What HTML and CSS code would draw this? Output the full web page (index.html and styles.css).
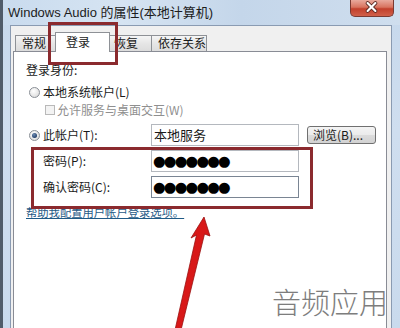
FILE: index.html
```html
<!DOCTYPE html>
<html lang="zh-CN">
<head>
<meta charset="utf-8">
<title>Windows Audio 的属性</title>
<link rel="stylesheet" href="styles.css">
</head>
<body>
<div class="window">
  <div class="titlebar">
    <span class="title">Windows Audio 的属性(本地计算机)</span>
    <div class="close">
      <svg width="44" height="17" viewBox="0 0 44 17">
        <path d="M18 4 L26 12 M26 4 L18 12" stroke="#5a2a24" stroke-width="4" stroke-linecap="round"/>
        <path d="M18 4 L26 12 M26 4 L18 12" stroke="#ffffff" stroke-width="2.2" stroke-linecap="round"/>
      </svg>
    </div>
  </div>
  <div class="client">
    <div class="tabs">
      <div class="tab tab-general">常规</div>
      <div class="tab tab-logon active">登录</div>
      <div class="tab tab-recovery">恢复</div>
      <div class="tab tab-deps">依存关系</div>
    </div>
    <div class="panel">
      <div class="section">登录身份:</div>
      <div class="opt"><span class="radio"></span><span>本地系统帐户(L)</span></div>
      <div class="opt sub disabled"><span class="check"></span><span>允许服务与桌面交互(W)</span></div>
      <div class="grid">
        <div class="opt"><span class="radio on"></span><span>此帐户(T):</span></div>
        <div class="field">本地服务</div>
        <div class="btn">浏览(B)...</div>
        <div class="lbl">密码(P):</div>
        <div class="field pw">●●●●●●●</div>
        <div></div>
        <div class="lbl">确认密码(C):</div>
        <div class="field pw focus">●●●●●●●</div>
        <div></div>
      </div>
      <a class="link">帮助我配置用户帐户登录选项。</a>
    </div>
  </div>
</div>
<div class="mark mark-tab"></div>
<div class="mark mark-pw"></div>
<svg class="arrow" width="400" height="328" viewBox="0 0 400 328">
  <polygon points="204,217 210,236 204.5,234 181,330 175,330 196.5,235 191,238" fill="#d81818" stroke="#9a1010" stroke-width="0.8" stroke-linejoin="round"/>
</svg>
<div class="watermark">音频应用</div>
</body>
</html>
```

FILE: styles.css
```css
html, body {
  margin: 0;
  padding: 0;
}
body {
  width: 400px;
  height: 328px;
  overflow: hidden;
  position: relative;
  font-family: "Noto Sans CJK SC", "Liberation Sans", sans-serif;
  font-size: 12px;
  color: #1a1a1a;
}
.window {
  width: 400px;
  height: 328px;
  box-sizing: border-box;
  border-left: 3px solid #505c6a;
  background: linear-gradient(180deg, #c6d8ec 0%, #cfdeef 40%, #c9daed 100%);
  display: flex;
  flex-direction: column;
}
.titlebar {
  height: 25px;
  display: flex;
  align-items: flex-start;
  padding-left: 5px;
  background: linear-gradient(90deg, #c9dbee 0%, #d6e4f2 30%, #c4d6ea 60%, #cfdeee 100%);
}
.title {
  font-family: "Liberation Sans", "Noto Sans CJK SC", sans-serif;
  font-size: 13px;
  line-height: 25px;
  color: #1c1c1c;
}
.close {
  margin-left: auto;
  margin-right: 6px;
  width: 44px;
  height: 17px;
  box-sizing: border-box;
  border: 1px solid #7a3a32;
  border-top: none;
  border-radius: 0 0 5px 5px;
  background: linear-gradient(180deg, #e9a99d 0%, #d8735f 45%, #c2402c 55%, #d0604a 100%);
  display: flex;
}
.close svg {
  margin: -1px 0 0 -1px;
}
.client {
  flex: 1;
  margin: 0 8px 0 7px;
  background: #f0f0f0;
  border: 1px solid #8a9bb2;
  border-bottom: none;
  padding: 6px 4px 0 2px;
  display: flex;
  flex-direction: column;
}
.tabs {
  display: flex;
  align-items: flex-end;
  height: 19px;
  margin-left: 2px;
  position: relative;
  z-index: 2;
}
.tab {
  box-sizing: border-box;
  height: 16px;
  border: 1px solid #8e9196;
  border-bottom: none;
  background: linear-gradient(180deg, #f5f5f5 0%, #e6e6e6 50%, #dcdcdc 100%);
  padding-left: 6px;
  font-size: 12px;
  line-height: 14px;
  white-space: nowrap;
  overflow: hidden;
  margin-right: -1px;
}
.tab-general { width: 43px; }
.tab-logon { width: 52px; }
.tab-recovery { width: 45px; }
.tab-deps { width: 56px; }
.tab.active {
  height: 20px;
  margin: 0 -3px -1px -2px;
  width: 55px;
  padding-left: 10px;
  line-height: 17px;
  background: #ffffff;
  position: relative;
  z-index: 3;
}
.panel {
  flex: 1;
  background: #ffffff;
  border: 1px solid #898c95;
  border-bottom: none;
  padding: 10px 0 0 12px;
  position: relative;
  z-index: 1;
}
.section {
  line-height: 16px;
  height: 16px;
}
.opt {
  display: flex;
  align-items: center;
  height: 16px;
  line-height: 16px;
  margin-top: 6px;
  gap: 3px;
}
.opt .radio {
  margin-left: 3px;
}
.opt.sub {
  margin-top: 2px;
  padding-left: 19px;
  gap: 2px;
}
.disabled {
  color: #8f8f8f;
}
.radio {
  width: 11px;
  height: 11px;
  box-sizing: border-box;
  border-radius: 50%;
  border: 1px solid #8a8f96;
  background: radial-gradient(circle at 40% 35%, #ffffff 0%, #e6e6e6 60%, #cfcfcf 100%);
  flex: none;
  display: flex;
  align-items: center;
  justify-content: center;
}
.radio.on::after {
  content: "";
  width: 5px;
  height: 5px;
  border-radius: 50%;
  background: radial-gradient(circle at 40% 35%, #6f8db5 0%, #24406a 70%);
}
.check {
  width: 10px;
  height: 10px;
  box-sizing: border-box;
  border: 1px solid #b9b9b9;
  background: #f3f3f3;
  flex: none;
}
.grid {
  display: grid;
  grid-template-columns: 117px 148px 69px;
  column-gap: 8px;
  grid-auto-rows: 22px;
  row-gap: 4px;
  margin-top: 6px;
  align-items: center;
}
.grid .opt {
  margin-top: 0;
}
.lbl {
  padding-left: 17px;
  line-height: 16px;
}
.field {
  height: 22px;
  box-sizing: border-box;
  border: 1px solid #b4b8be;
  background: #ffffff;
  padding-left: 2px;
  font-size: 13px;
  line-height: 20px;
  white-space: nowrap;
  overflow: hidden;
}
.field.pw {
  font-family: "DejaVu Sans", sans-serif;
  font-size: 14.5px;
  letter-spacing: -1.8px;
  line-height: 20px;
  padding-left: 1px;
  color: #000000;
}
.field.focus {
  border-color: #7a8593;
}
.btn {
  height: 18px;
  box-sizing: border-box;
  border: 1px solid #707070;
  border-radius: 3px;
  background: linear-gradient(180deg, #f4f4f4 0%, #ebebeb 50%, #dcdcdc 51%, #d2d2d2 100%);
  font-size: 12px;
  line-height: 16px;
  padding-left: 5px;
  white-space: nowrap;
}
.link {
  display: block;
  margin-top: 6px;
  line-height: 16px;
  font-size: 11.3px;
  color: #1f5a86;
  text-decoration: underline;
}
.mark {
  position: absolute;
  box-sizing: border-box;
  border: 3px solid #8b2a2e;
  z-index: 5;
}
.mark-tab {
  left: 48px;
  top: 22px;
  width: 70px;
  height: 43px;
}
.mark-pw {
  left: 31px;
  top: 147px;
  width: 282px;
  height: 62px;
}
.arrow {
  position: absolute;
  left: 0;
  top: 0;
  z-index: 6;
}
.watermark {
  position: absolute;
  left: 272px;
  top: 284px;
  font-size: 29px;
  line-height: 34px;
  font-weight: 300;
  color: #7d7d7d;
  z-index: 6;
  white-space: nowrap;
}
```
